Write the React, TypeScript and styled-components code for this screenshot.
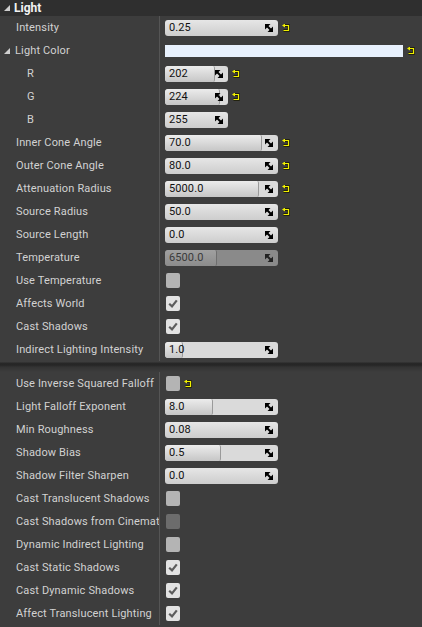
import React from 'react';
import styled, { createGlobalStyle } from 'styled-components';

const Global = createGlobalStyle`
  html, body { margin: 0; padding: 0; background: #3d3d3d; }
  body { font-family: Roboto, "Noto Sans", "Liberation Sans", sans-serif; }
  #root { width: 422px; height: 627px; overflow: hidden; }
`;

const Panel = styled.div`
  display: flex;
  flex-direction: column;
  width: 422px;
  background: #3d3d3d;
`;

const Header = styled.div`
  height: 16px;
  display: flex;
  align-items: center;
  gap: 4px;
  padding-left: 4px;
  background: #2f2f2f;
  color: #f2f2f2;
  font-size: 12px;
  font-weight: 700;
`;

const Section = styled.div`
  display: flex;
  flex-direction: column;
`;

const Separator = styled.div`
  height: 11px;
  background: linear-gradient(#3d3d3d 0, #3d3d3d 1px, #282828 2px, #262626 4px, #333 6px, #3d3d3d 11px);
`;

const Row = styled.div`
  display: grid;
  grid-template-columns: 160px 1fr;
  height: 23px;
`;

const Label = styled.div<{ $indent?: number }>`
  display: flex;
  align-items: center;
  gap: 5px;
  padding-left: ${p => p.$indent ?? 16}px;
  border-right: 1px solid #555;
  color: #d2d2d2;
  font-size: 11px;
  letter-spacing: 0.15px;
  white-space: nowrap;
  overflow: hidden;
`;

const Value = styled.div`
  display: flex;
  align-items: center;
  gap: 4px;
  padding-left: 5px;
`;

const Field = styled.div<{ $w: number; $disabled?: boolean; $flat?: boolean }>`
  position: relative;
  width: ${p => p.$w}px;
  height: 16px;
  border-radius: 3px;
  overflow: hidden;
  display: flex;
  align-items: center;
  background: ${p =>
    p.$disabled ? '#8a8a8a' : p.$flat ? '#dadada' : 'linear-gradient(#e6e6e6, #cdcdcd)'};
  color: ${p => (p.$disabled ? '#3a3a3a' : '#111')};
  font-size: 11px;
  letter-spacing: 0.1px;
`;

const Fill = styled.div<{ $disabled?: boolean }>`
  position: absolute;
  left: 0;
  top: 0;
  bottom: 0;
  background: ${p =>
    p.$disabled ? 'linear-gradient(#a0a0a0, #8c8c8c)' : 'linear-gradient(#ececec, #c6c6c6)'};
  border-right: 1px solid ${p => (p.$disabled ? '#6e6e6e' : '#9a9a9a')};
  border-radius: 3px 2px 2px 3px;
`;

const FieldText = styled.span`
  position: relative;
  padding-left: 4px;
  flex: 1;
`;

const SpinWrap = styled.span`
  position: relative;
  display: flex;
  margin-right: 5px;
`;

const ColorBar = styled.div`
  width: 238px;
  height: 12px;
  background: #e8f1fd;
`;

const Check = styled.div<{ $checked?: boolean; $disabled?: boolean }>`
  width: 14px;
  height: 15px;
  margin-left: 1px;
  border-radius: 2px;
  display: flex;
  align-items: center;
  justify-content: center;
  background: ${p => (p.$disabled ? '#6c6c6c' : p.$checked ? '#e2e2e2' : '#b4b4b4')};
`;

const Spin = ({ dark }: { dark?: boolean }) => {
  const c = dark ? '#222' : '#000';
  return (
    <SpinWrap>
      <svg width="8" height="8" viewBox="0 0 8 8">
        <polygon points="0,0 5.5,0 0,5.5" fill={c} />
        <polygon points="8,8 2.5,8 8,2.5" fill={c} />
        <line x1="1" y1="1" x2="7" y2="7" stroke={c} strokeWidth="2" />
      </svg>
    </SpinWrap>
  );
};

const Reset = () => (
  <svg width="8" height="8" viewBox="0 0 8 8">
    <path d="M2.5 1.5 H6.5 V6.5 H1.5" fill="none" stroke="#1a1a00" strokeWidth="2.4" />
    <path d="M2.5 1.5 H6.5 V6.5 H1.5" fill="none" stroke="#f0f000" strokeWidth="1.2" />
    <polygon points="0,1.5 3,-0.5 3,3.5" fill="#f0f000" />
  </svg>
);

const Expander = () => (
  <svg width="6" height="6" viewBox="0 0 6 6">
    <polygon points="0,6 6,6 6,0" fill="#cfcfcf" />
  </svg>
);

const CheckMark = () => (
  <svg width="10" height="9" viewBox="0 0 10 9">
    <path d="M1.2 4.8 L4 7.4 L8.8 1.4" fill="none" stroke="#5c5c5c" strokeWidth="2.2" />
  </svg>
);

type Item =
  | { kind: 'num'; label: string; value: string; w?: number; fill?: number; reset?: boolean; disabled?: boolean; indent?: number }
  | { kind: 'check'; label: string; checked?: boolean; disabled?: boolean; reset?: boolean }
  | { kind: 'color'; label: string };

const top: Item[] = [
  { kind: 'num', label: 'Intensity', value: '0.25', reset: true },
  { kind: 'color', label: 'Light Color' },
  { kind: 'num', label: 'R', value: '202', w: 63, fill: 49, reset: true, indent: 27 },
  { kind: 'num', label: 'G', value: '224', w: 63, fill: 54, reset: true, indent: 27 },
  { kind: 'num', label: 'B', value: '255', w: 63, indent: 27 },
  { kind: 'num', label: 'Inner Cone Angle', value: '70.0', fill: 96, reset: true },
  { kind: 'num', label: 'Outer Cone Angle', value: '80.0', reset: true },
  { kind: 'num', label: 'Attenuation Radius', value: '5000.0', fill: 93, reset: true },
  { kind: 'num', label: 'Source Radius', value: '50.0', reset: true },
  { kind: 'num', label: 'Source Length', value: '0.0' },
  { kind: 'num', label: 'Temperature', value: '6500.0', fill: 51, disabled: true },
  { kind: 'check', label: 'Use Temperature' },
  { kind: 'check', label: 'Affects World', checked: true },
  { kind: 'check', label: 'Cast Shadows', checked: true },
  { kind: 'num', label: 'Indirect Lighting Intensity', value: '1.0', fill: 17 },
];

const bottom: Item[] = [
  { kind: 'check', label: 'Use Inverse Squared Falloff', reset: true },
  { kind: 'num', label: 'Light Falloff Exponent', value: '8.0', fill: 47 },
  { kind: 'num', label: 'Min Roughness', value: '0.08' },
  { kind: 'num', label: 'Shadow Bias', value: '0.5', fill: 55 },
  { kind: 'num', label: 'Shadow Filter Sharpen', value: '0.0' },
  { kind: 'check', label: 'Cast Translucent Shadows' },
  { kind: 'check', label: 'Cast Shadows from Cinematic Objects Only', disabled: true },
  { kind: 'check', label: 'Dynamic Indirect Lighting' },
  { kind: 'check', label: 'Cast Static Shadows', checked: true },
  { kind: 'check', label: 'Cast Dynamic Shadows', checked: true },
  { kind: 'check', label: 'Affect Translucent Lighting', checked: true },
];

const PropRow = ({ item }: { item: Item }) => {
  if (item.kind === 'color') {
    return (
      <Row>
        <Label $indent={4}>
          <Expander />
          {item.label}
        </Label>
        <Value>
          <ColorBar />
          <Reset />
        </Value>
      </Row>
    );
  }
  if (item.kind === 'check') {
    return (
      <Row>
        <Label>{item.label}</Label>
        <Value>
          <Check $checked={item.checked} $disabled={item.disabled}>
            {item.checked && <CheckMark />}
          </Check>
          {item.reset && <Reset />}
        </Value>
      </Row>
    );
  }
  const hasFill = item.fill !== undefined;
  return (
    <Row>
      <Label $indent={item.indent}>{item.label}</Label>
      <Value>
        <Field $w={item.w ?? 113} $disabled={item.disabled} $flat={hasFill}>
          {hasFill && <Fill $disabled={item.disabled} style={{ width: item.fill }} />}
          <FieldText>{item.value}</FieldText>
          <Spin dark={item.disabled} />
        </Field>
        {item.reset && <Reset />}
      </Value>
    </Row>
  );
};

export default function App() {
  return (
    <Panel>
      <Global />
      <Header>
        <Expander />
        Light
      </Header>
      <Section>
        {top.map(it => (
          <PropRow key={it.label} item={it} />
        ))}
      </Section>
      <Separator />
      <Section>
        {bottom.map(it => (
          <PropRow key={it.label} item={it} />
        ))}
      </Section>
    </Panel>
  );
}
